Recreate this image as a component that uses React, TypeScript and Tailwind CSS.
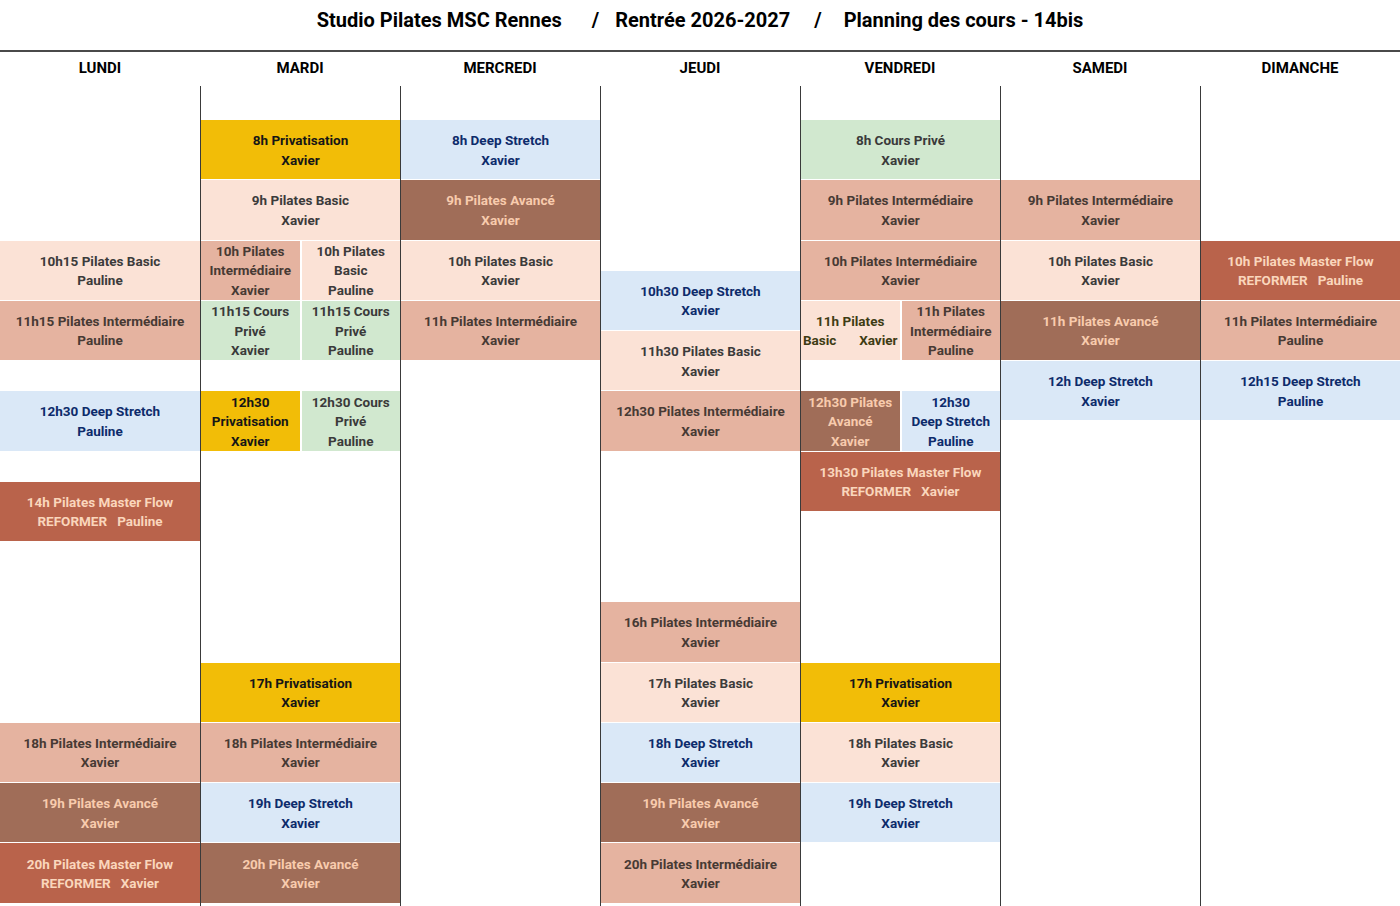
import type { ReactNode } from "react";

type Kind = "priv" | "deep" | "basic" | "inter" | "avance" | "master" | "prive";

type Cell = {
  kind: Kind;
  lines: ReactNode[];
  text?: string;
};

type Block = {
  pos: string;
  cells: Cell[];
};

const kindStyles: Record<Kind, string> = {
  priv: "bg-[#f2bd07] text-[#161616]",
  deep: "bg-[#dae8f7] text-[#0d2b6b]",
  basic: "bg-[#fbe2d6] text-[#3b3b3b]",
  inter: "bg-[#e5b3a0] text-[#473a34]",
  avance: "bg-[#a06d58] text-[#f8cbad]",
  master: "bg-[#b9634b] text-[#fad6bc]",
  prive: "bg-[#d1e8cf] text-[#3a3a3a]",
};

const days = ["LUNDI", "MARDI", "MERCREDI", "JEUDI", "VENDREDI", "SAMEDI", "DIMANCHE"];

const one = (kind: Kind, ...lines: ReactNode[]): Cell[] => [{ kind, lines }];

const schedule: Block[][] = [
  // lundi
  [
    { pos: "row-start-6 row-span-2", cells: one("basic", "10h15 Pilates Basic", "Pauline") },
    { pos: "row-start-8 row-span-2", cells: one("inter", "11h15 Pilates Intermédiaire", "Pauline") },
    { pos: "row-start-11 row-span-2", cells: one("deep", "12h30 Deep Stretch", "Pauline") },
    { pos: "row-start-14 row-span-2", cells: one("master", "14h Pilates Master Flow", "REFORMER   Pauline") },
    { pos: "row-start-22 row-span-2", cells: one("inter", "18h Pilates Intermédiaire", "Xavier") },
    { pos: "row-start-24 row-span-2", cells: one("avance", "19h Pilates Avancé", "Xavier") },
    { pos: "row-start-26 row-span-2", cells: one("master", "20h Pilates Master Flow", "REFORMER   Xavier") },
  ],
  // mardi
  [
    { pos: "row-start-2 row-span-2", cells: one("priv", "8h Privatisation", "Xavier") },
    { pos: "row-start-4 row-span-2", cells: one("basic", "9h Pilates Basic", "Xavier") },
    {
      pos: "row-start-6 row-span-2",
      cells: [
        { kind: "inter", lines: ["10h Pilates", "Intermédiaire", "Xavier"] },
        { kind: "basic", lines: ["10h Pilates", "Basic", "Pauline"] },
      ],
    },
    {
      pos: "row-start-8 row-span-2",
      cells: [
        { kind: "prive", lines: ["11h15 Cours", "Privé", "Xavier"] },
        { kind: "prive", lines: ["11h15 Cours", "Privé", "Pauline"] },
      ],
    },
    {
      pos: "row-start-11 row-span-2",
      cells: [
        { kind: "priv", lines: ["12h30", "Privatisation", "Xavier"], text: "text-[#3d3a2c]" },
        { kind: "prive", lines: ["12h30 Cours", "Privé", "Pauline"] },
      ],
    },
    { pos: "row-start-20 row-span-2", cells: one("priv", "17h Privatisation", "Xavier") },
    { pos: "row-start-22 row-span-2", cells: one("inter", "18h Pilates Intermédiaire", "Xavier") },
    { pos: "row-start-24 row-span-2", cells: one("deep", "19h Deep Stretch", "Xavier") },
    { pos: "row-start-26 row-span-2", cells: one("avance", "20h Pilates Avancé", "Xavier") },
  ],
  // mercredi
  [
    { pos: "row-start-2 row-span-2", cells: one("deep", "8h Deep Stretch", "Xavier") },
    { pos: "row-start-4 row-span-2", cells: one("avance", "9h Pilates Avancé", "Xavier") },
    { pos: "row-start-6 row-span-2", cells: one("basic", "10h Pilates Basic", "Xavier") },
    { pos: "row-start-8 row-span-2", cells: one("inter", "11h Pilates Intermédiaire", "Xavier") },
  ],
  // jeudi
  [
    { pos: "row-start-7 row-span-2", cells: one("deep", "10h30 Deep Stretch", "Xavier") },
    { pos: "row-start-9 row-span-2", cells: one("basic", "11h30 Pilates Basic", "Xavier") },
    { pos: "row-start-11 row-span-2", cells: one("inter", "12h30 Pilates Intermédiaire", "Xavier") },
    { pos: "row-start-18 row-span-2", cells: one("inter", "16h Pilates Intermédiaire", "Xavier") },
    { pos: "row-start-20 row-span-2", cells: one("basic", "17h Pilates Basic", "Xavier") },
    { pos: "row-start-22 row-span-2", cells: one("deep", "18h Deep Stretch", "Xavier") },
    { pos: "row-start-24 row-span-2", cells: one("avance", "19h Pilates Avancé", "Xavier") },
    { pos: "row-start-26 row-span-2", cells: one("inter", "20h Pilates Intermédiaire", "Xavier") },
  ],
  // vendredi
  [
    { pos: "row-start-2 row-span-2", cells: one("prive", "8h Cours Privé", "Xavier") },
    { pos: "row-start-4 row-span-2", cells: one("inter", "9h Pilates Intermédiaire", "Xavier") },
    { pos: "row-start-6 row-span-2", cells: one("inter", "10h Pilates Intermédiaire", "Xavier") },
    {
      pos: "row-start-8 row-span-2",
      cells: [
        {
          kind: "basic",
          text: "text-[#3e3c14]",
          lines: [
            "11h Pilates",
            <span key="b" className="flex w-full justify-between pl-[2px] pr-[2px]">
              <span>Basic</span>
              <span>Xavier</span>
            </span>,
          ],
        },
        { kind: "inter", lines: ["11h Pilates", "Intermédiaire", "Pauline"] },
      ],
    },
    {
      pos: "row-start-11 row-span-2",
      cells: [
        { kind: "avance", lines: ["12h30 Pilates", "Avancé", "Xavier"] },
        { kind: "deep", lines: ["12h30", "Deep Stretch", "Pauline"] },
      ],
    },
    { pos: "row-start-13 row-span-2", cells: one("master", "13h30 Pilates Master Flow", "REFORMER   Xavier") },
    { pos: "row-start-20 row-span-2", cells: one("priv", "17h Privatisation", "Xavier") },
    { pos: "row-start-22 row-span-2", cells: one("basic", "18h Pilates Basic", "Xavier") },
    { pos: "row-start-24 row-span-2", cells: one("deep", "19h Deep Stretch", "Xavier") },
  ],
  // samedi
  [
    { pos: "row-start-4 row-span-2", cells: one("inter", "9h Pilates Intermédiaire", "Xavier") },
    { pos: "row-start-6 row-span-2", cells: one("basic", "10h Pilates Basic", "Xavier") },
    { pos: "row-start-8 row-span-2", cells: one("avance", "11h Pilates Avancé", "Xavier") },
    { pos: "row-start-10 row-span-2", cells: one("deep", "12h Deep Stretch", "Xavier") },
  ],
  // dimanche
  [
    { pos: "row-start-6 row-span-2", cells: one("master", "10h Pilates Master Flow", "REFORMER   Pauline") },
    { pos: "row-start-8 row-span-2", cells: one("inter", "11h Pilates Intermédiaire", "Pauline") },
    { pos: "row-start-10 row-span-2", cells: one("deep", "12h15 Deep Stretch", "Pauline") },
  ],
];

function CourseCell({ cell }: { cell: Cell }) {
  return (
    <div
      className={`flex flex-1 min-w-0 flex-col items-center justify-center overflow-hidden pt-[2px] text-center ${kindStyles[cell.kind]} ${cell.text ?? ""}`}
    >
      {cell.lines.map((line, i) => (
        <div key={i} className="w-full whitespace-pre leading-[19.5px]">
          {line}
        </div>
      ))}
    </div>
  );
}

export default function App() {
  return (
    <div
      className="w-[1400px] h-[906px] overflow-hidden bg-white font-bold text-black"
      style={{ fontFamily: "Roboto, 'Liberation Sans', sans-serif" }}
    >
      {/* titre */}
      <div className="flex h-[50px] items-start justify-center pt-[6px] text-[20px] leading-[28px] whitespace-pre">
        <span>Studio Pilates MSC Rennes</span>
        <span className="ml-[30px] mr-[16px]">/</span>
        <span>Rentrée 2026-2027</span>
        <span className="ml-[24px] mr-[22px]">/</span>
        <span>Planning des cours - 14bis</span>
      </div>
      <div className="h-[2px] bg-[#4a4a4a]" />

      {/* jours */}
      <div className="grid h-[34px] grid-cols-7 text-[15px]">
        {days.map((d) => (
          <div key={d} className="flex items-center justify-center pb-[1px]">
            {d}
          </div>
        ))}
      </div>

      {/* planning */}
      <div className="grid h-[820px] grid-cols-7 text-[13.5px]">
        {schedule.map((blocks, di) => (
          <div
            key={days[di]}
            className={`grid min-w-0 grid-cols-1 grid-rows-[34px_repeat(26,30.15px)] ${di > 0 ? "border-l border-[#3a3a3a]" : ""}`}
          >
            {blocks.map((b, bi) => (
              <div key={bi} className={`${b.pos} mb-px flex min-w-0 gap-[2px]`}>
                {b.cells.map((c, ci) => (
                  <CourseCell key={ci} cell={c} />
                ))}
              </div>
            ))}
          </div>
        ))}
      </div>
    </div>
  );
}
